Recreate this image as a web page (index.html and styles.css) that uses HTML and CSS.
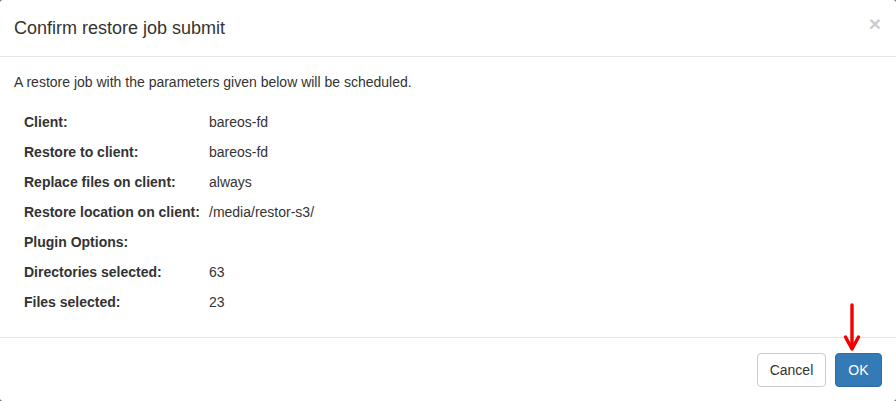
FILE: index.html
```html
<!DOCTYPE html>
<html>
<head>
<meta charset="utf-8">
<link rel="stylesheet" href="styles.css">
</head>
<body>
<div class="modal">
  <div class="modal-header">
    <h4 class="modal-title">Confirm restore job submit</h4>
    <span class="close">×</span>
  </div>
  <div class="modal-body">
    <p class="intro">A restore job with the parameters given below will be scheduled.</p>
    <table class="params">
      <tr><th>Client:</th><td>bareos-fd</td></tr>
      <tr><th>Restore to client:</th><td>bareos-fd</td></tr>
      <tr><th>Replace files on client:</th><td>always</td></tr>
      <tr><th>Restore location on client:</th><td>/media/restor-s3/</td></tr>
      <tr><th>Plugin Options:</th><td></td></tr>
      <tr><th>Directories selected:</th><td>63</td></tr>
      <tr><th>Files selected:</th><td>23</td></tr>
    </table>
  </div>
  <div class="modal-footer">
    <button class="btn btn-default">Cancel</button>
    <button class="btn btn-primary">OK</button>
    <svg class="arrow" width="20" height="50" viewBox="0 0 20 50">
      <path d="M10 2 L10 44" stroke="#f20000" stroke-width="3.4" stroke-linecap="round" fill="none"/>
      <path d="M3.5 34 L10 46 L16.5 34" stroke="#f20000" stroke-width="3.4" stroke-linecap="round" stroke-linejoin="round" fill="none"/>
    </svg>
  </div>
</div>
</body>
</html>
```

FILE: styles.css
```css
html, body {
  margin: 0;
  padding: 0;
  background: #6b6b6b;
}
body {
  font-family: "Liberation Sans", Arial, sans-serif;
  font-size: 14px;
  line-height: 20px;
  color: #333;
}
.modal {
  position: relative;
  width: 896px;
  height: 401px;
  background: #fff;
  border-radius: 3px;
  box-sizing: border-box;
  display: flex;
  flex-direction: column;
}
.modal-header {
  display: flex;
  align-items: center;
  justify-content: space-between;
  padding: 15px 14px 15px 14px;
  border-bottom: 1px solid #e5e5e5;
}
.modal-title {
  margin: 0;
  font-size: 18px;
  font-weight: normal;
  line-height: 26px;
  color: #333;
}
.close {
  font-size: 21px;
  font-weight: bold;
  color: #000;
  opacity: 0.2;
  line-height: 1;
  margin-top: -9px;
  margin-right: 1px;
}
.modal-body {
  padding: 15px 14px 20px 14px;
  flex: 1;
}
.intro {
  margin: 0 0 15px 0;
}
.params {
  border-collapse: collapse;
  table-layout: fixed;
}
.params th,
.params td {
  padding: 5px 0;
  height: 20px;
  text-align: left;
  vertical-align: top;
  white-space: nowrap;
}
.params th {
  font-weight: bold;
  width: 185px;
  padding-left: 10px;
}
.modal-footer {
  position: relative;
  display: flex;
  justify-content: flex-end;
  gap: 9px;
  padding: 15px 14px 14px 14px;
  border-top: 1px solid #e5e5e5;
}
.btn {
  font-family: "Liberation Sans", Arial, sans-serif;
  font-size: 14px;
  line-height: 20px;
  padding: 6px 12px;
  border-radius: 4px;
  border: 1px solid #ccc;
  background: #fff;
  color: #333;
  margin: 0;
}
.btn-default {
  padding: 6px 11.5px;
}
.btn-primary {
  background: #337ab7;
  border-color: #2e6da4;
  color: #fff;
  padding: 6px 12.5px;
}
.arrow {
  position: absolute;
  right: 34px;
  top: -35px;
}
```
